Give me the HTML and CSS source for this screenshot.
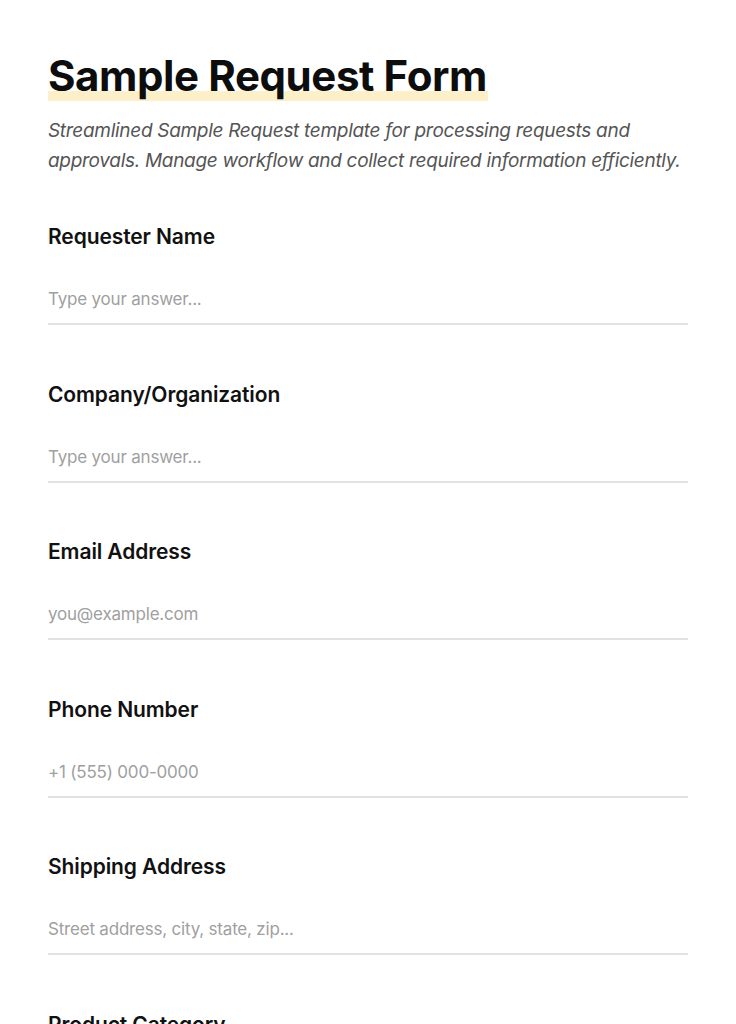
FILE: index.html
```html
<!DOCTYPE html>
<html lang="en">
<head>
<meta charset="utf-8">
<title>Sample Request Form</title>
<link rel="stylesheet" href="styles.css">
</head>
<body>
<main class="form">
  <header class="form-header">
    <h1 class="title"><span class="title-mark">Sample Request Form</span></h1>
    <p class="subtitle">Streamlined Sample Request template for processing requests and approvals. Manage workflow and collect required information efficiently.</p>
  </header>
  <div class="field">
    <label class="label" for="f1">Requester Name</label>
    <input class="input" id="f1" type="text" placeholder="Type your answer...">
  </div>
  <div class="field">
    <label class="label" for="f2">Company/Organization</label>
    <input class="input" id="f2" type="text" placeholder="Type your answer...">
  </div>
  <div class="field">
    <label class="label" for="f3">Email Address</label>
    <input class="input" id="f3" type="email" placeholder="you@example.com">
  </div>
  <div class="field">
    <label class="label" for="f4">Phone Number</label>
    <input class="input" id="f4" type="tel" placeholder="+1 (555) 000-0000">
  </div>
  <div class="field">
    <label class="label" for="f5">Shipping Address</label>
    <input class="input" id="f5" type="text" placeholder="Street address, city, state, zip...">
  </div>
  <div class="field">
    <label class="label" for="f6">Product Category</label>
    <input class="input" id="f6" type="text" placeholder="Select...">
  </div>
</main>
</body>
</html>
```
FILE: styles.css
```css
* { box-sizing: border-box; }
html, body { margin: 0; padding: 0; background: #ffffff; }
body {
  font-family: Inter, "Noto Sans", "Liberation Sans", sans-serif;
  color: #111111;
}
.form {
  padding: 48px 48px 48px 48px;
  display: flex;
  flex-direction: column;
}
.form-header { margin-bottom: 47px; }
.title {
  margin: 0;
  font-size: 42px;
  line-height: 56px;
  font-weight: 700;
  letter-spacing: -0.4px;
  color: #0d0d0d;
}
.title-mark {
  background: linear-gradient(to bottom, transparent 0, transparent 80%, #fdf0c9 80%, #fdf0c9 100%);
  padding-right: 1px;
}
.subtitle {
  margin: 12px 0 0 0;
  font-size: 19px;
  line-height: 30px;
  font-style: italic;
  color: #555555;
  letter-spacing: -0.3px;
}
.field {
  display: flex;
  flex-direction: column;
  margin-bottom: 55.5px;
}
.label {
  font-size: 21px;
  line-height: 28px;
  font-weight: 600;
  color: #111111;
  letter-spacing: -0.1px;
}
.input {
  margin-top: 36px;
  border: 0;
  border-bottom: 2px solid #e2e2e2;
  padding: 0 0 12px 0;
  font-family: inherit;
  font-size: 17px;
  line-height: 24px;
  color: #111;
  background: transparent;
  outline: none;
  letter-spacing: -0.2px;
}
.input::placeholder { color: #a0a0a0; }
```
